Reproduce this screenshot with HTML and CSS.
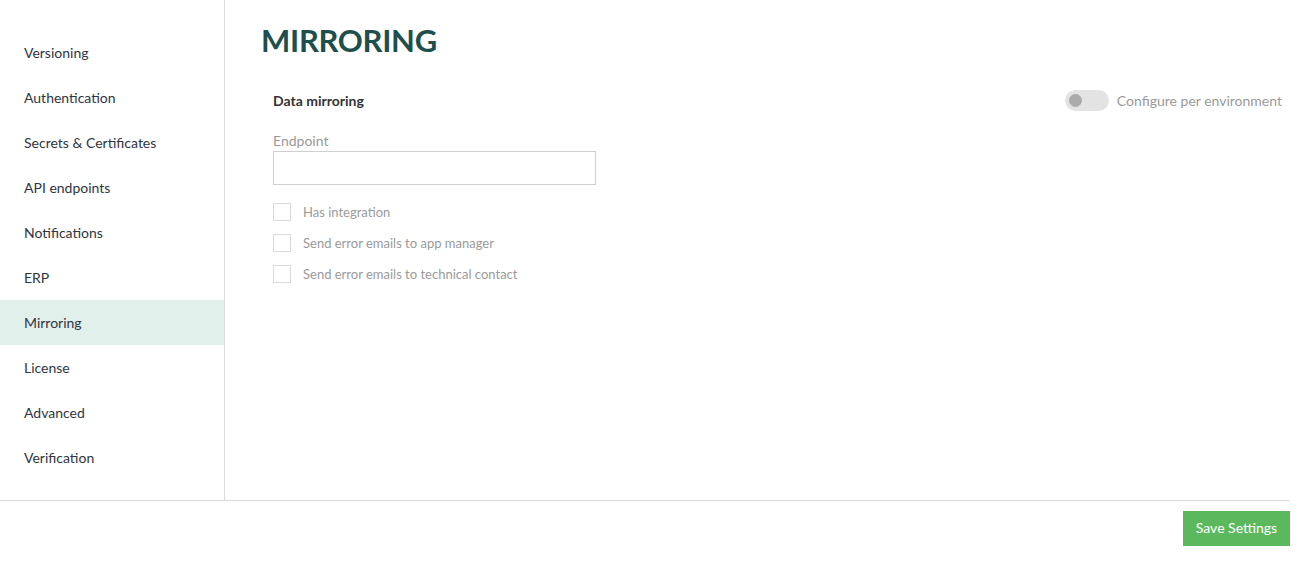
FILE: index.html
```html
<!DOCTYPE html>
<html>
<head>
<meta charset="utf-8">
<link rel="stylesheet" href="styles.css">
</head>
<body>
<div class="page">
  <div class="layout">
    <nav class="sidebar">
      <div class="nav-item">Versioning</div>
      <div class="nav-item">Authentication</div>
      <div class="nav-item">Secrets &amp; Certificates</div>
      <div class="nav-item">API endpoints</div>
      <div class="nav-item">Notifications</div>
      <div class="nav-item">ERP</div>
      <div class="nav-item active">Mirroring</div>
      <div class="nav-item">License</div>
      <div class="nav-item">Advanced</div>
      <div class="nav-item">Verification</div>
    </nav>
    <main class="main">
      <h1 class="title">MIRRORING</h1>
      <div class="form">
        <div class="section-row">
          <span class="section-label">Data mirroring</span>
          <label class="toggle-wrap">
            <span class="toggle"><span class="knob"></span></span>
            <span class="toggle-label">Configure per environment</span>
          </label>
        </div>
        <div class="field">
          <div class="field-label">Endpoint</div>
          <div class="input"></div>
        </div>
        <div class="checks">
          <div class="check-row"><span class="box"></span><span class="check-label">Has integration</span></div>
          <div class="check-row"><span class="box"></span><span class="check-label">Send error emails to app manager</span></div>
          <div class="check-row"><span class="box"></span><span class="check-label">Send error emails to technical contact</span></div>
        </div>
      </div>
    </main>
  </div>
  <footer class="footer">
    <button class="save">Save Settings</button>
  </footer>
</div>
</body>
</html>
```
FILE: styles.css
```css
* { box-sizing: border-box; }
html, body { margin: 0; padding: 0; background: #fff; }
body { font-family: Lato, "Open Sans", sans-serif; color: #333; }
.page { width: 1290px; }
.layout {
  display: flex;
  height: 501px;
  border-bottom: 1px solid #dcdcdc;
}
.sidebar {
  width: 225px;
  flex: none;
  border-right: 1px solid #dcdcdc;
  padding-top: 30px;
}
.nav-item {
  height: 45px;
  line-height: 45px;
  padding-left: 24px;
  font-size: 14px;
  color: #2f3540;
}
.nav-item.active { background: #e2f0eb; }
.main {
  flex: 1;
  padding: 20px 8px 0 36px;
}
.title {
  margin: 0;
  font-size: 31px;
  line-height: 40px;
  font-weight: 700;
  color: #1f4f4c;
  letter-spacing: -0.3px;
}
.form { padding-left: 12px; }
.section-row {
  margin-top: 30px;
  height: 21px;
  display: flex;
  align-items: center;
  justify-content: space-between;
}
.section-label { font-size: 14px; font-weight: 700; color: #333; }
.toggle-wrap { display: flex; align-items: center; gap: 8px; }
.toggle {
  width: 44px;
  height: 21px;
  border-radius: 11px;
  background: #e3e3e3;
  display: flex;
  align-items: center;
  padding-left: 4px;
}
.knob { width: 13px; height: 13px; border-radius: 50%; background: #ababab; }
.toggle-label { font-size: 14px; color: #9a9a9a; }
.field { margin-top: 20px; }
.field-label { font-size: 14px; line-height: 20px; color: #9a9a9a; }
.input {
  width: 323px;
  height: 34px;
  border: 1px solid #cfcfcf;
}
.checks {
  margin-top: 18px;
  display: flex;
  flex-direction: column;
  gap: 13px;
}
.check-row { display: flex; align-items: center; height: 18px; gap: 12px; }
.box { width: 18px; height: 18px; border: 1px solid #dadada; flex: none; }
.check-label { font-size: 13px; color: #9a9a9a; }
.footer { display: flex; justify-content: flex-end; padding-top: 10px; }
.save {
  font-family: Lato, sans-serif;
  font-size: 14px;
  line-height: 34px;
  color: #fff;
  background: #5cb85c;
  border: none;
  width: 107px;
  height: 35px;
  padding: 0 0 1px;
}
```
